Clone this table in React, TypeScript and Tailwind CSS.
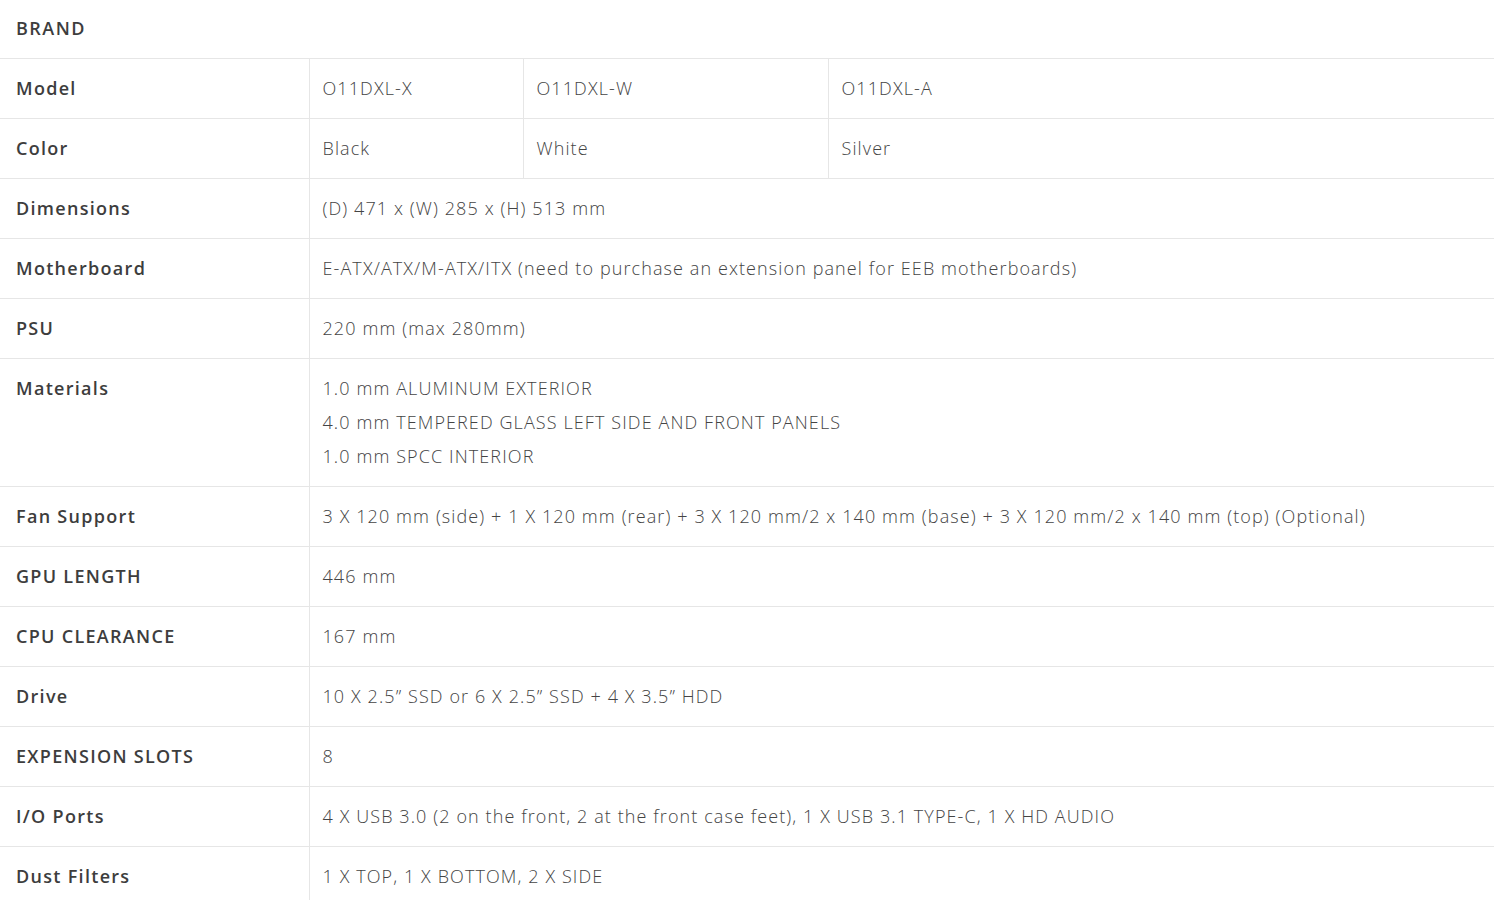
const font = { fontFamily: '"Open Sans", "Liberation Sans", sans-serif' };

type Row = { label: string; values: string[][] };

const rows: Row[] = [
  { label: 'Model', values: [['O11DXL-X'], ['O11DXL-W'], ['O11DXL-A']] },
  { label: 'Color', values: [['Black'], ['White'], ['Silver']] },
  { label: 'Dimensions', values: [['(D) 471 x (W) 285 x (H) 513 mm']] },
  {
    label: 'Motherboard',
    values: [['E-ATX/ATX/M-ATX/ITX (need to purchase an extension panel for EEB motherboards)']],
  },
  { label: 'PSU', values: [['220 mm (max 280mm)']] },
  {
    label: 'Materials',
    values: [
      [
        '1.0 mm ALUMINUM EXTERIOR',
        '4.0 mm TEMPERED GLASS LEFT SIDE AND FRONT PANELS',
        '1.0 mm SPCC INTERIOR',
      ],
    ],
  },
  {
    label: 'Fan Support',
    values: [
      [
        '3 X 120 mm (side) + 1 X 120 mm (rear) + 3 X 120 mm/2 x 140 mm (base) + 3 X 120 mm/2 x 140 mm (top) (Optional)',
      ],
    ],
  },
  { label: 'GPU LENGTH', values: [['446 mm']] },
  { label: 'CPU CLEARANCE', values: [['167 mm']] },
  { label: 'Drive', values: [['10 X 2.5” SSD or 6 X 2.5” SSD + 4 X 3.5” HDD']] },
  { label: 'EXPENSION SLOTS', values: [['8']] },
  {
    label: 'I/O Ports',
    values: [['4 X USB 3.0 (2 on the front, 2 at the front case feet), 1 X USB 3.1 TYPE-C, 1 X HD AUDIO']],
  },
  { label: 'Dust Filters', values: [['1 X TOP, 1 X BOTTOM, 2 X SIDE']] },
];

function Cell({ lines, span }: { lines: string[]; span?: number }) {
  return (
    <td
      colSpan={span}
      className="border-l border-t border-[#e6e6e6] px-[13px] py-4 align-top text-[18px] font-light tracking-[1.1px] text-[#444]"
    >
      <div className="flex flex-col gap-[7px]">
        {lines.map((l) => (
          <p key={l} className="leading-[27px] whitespace-nowrap">
            {l}
          </p>
        ))}
      </div>
    </td>
  );
}

export default function App() {
  return (
    <div className="min-h-screen bg-white" style={font}>
      <table className="w-full table-fixed border-collapse">
        <colgroup>
          <col className="w-[309px]" />
          <col className="w-[214px]" />
          <col className="w-[305px]" />
          <col />
        </colgroup>
        <tbody>
          <tr>
            <td
              colSpan={4}
              className="px-4 pt-[15px] pb-4 text-[18px] font-semibold leading-[27px] tracking-[1.5px] text-[#3d3d3d]"
            >
              BRAND
            </td>
          </tr>
          {rows.map((r) => (
            <tr key={r.label}>
              <td className="border-t border-[#e6e6e6] px-4 py-4 align-top text-[18px] font-semibold leading-[27px] tracking-[1.3px] text-[#3d3d3d] whitespace-nowrap">
                {r.label}
              </td>
              {r.values.length === 1 ? (
                <Cell lines={r.values[0]} span={3} />
              ) : (
                r.values.map((v, i) => <Cell key={i} lines={v} />)
              )}
            </tr>
          ))}
        </tbody>
      </table>
    </div>
  );
}
